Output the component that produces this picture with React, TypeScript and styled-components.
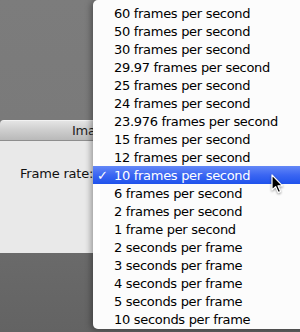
import React from 'react';
import styled, { createGlobalStyle, css } from 'styled-components';

const GlobalStyle = createGlobalStyle`
  html, body {
    margin: 0;
    padding: 0;
  }
  body {
    font-family: "DejaVu Sans", "Liberation Sans", sans-serif;
    -webkit-font-smoothing: antialiased;
  }
`;

const Screen = styled.div`
  position: relative;
  width: 300px;
  height: 332px;
  overflow: hidden;
  display: flex;
  flex-direction: column;
  background: linear-gradient(#7c7c7c 0, #7a7a7a 120px, #6a6a6a 253px, #636363 332px);
`;

const Dialog = styled.div`
  margin-top: 120px;
  width: 100px;
  display: flex;
  flex-direction: column;
  border-top-left-radius: 4px;
  overflow: hidden;
`;

const TitleBar = styled.div`
  height: 21px;
  display: flex;
  align-items: center;
  padding-left: 72px;
  overflow: hidden;
  white-space: nowrap;
  font-size: 13px;
  letter-spacing: -0.3px;
  color: #1e1e1e;
  background: linear-gradient(#e4e4e4, #cfcfcf 45%, #b9b9b9);
  border-top: 1px solid #f2f2f2;
  border-bottom: 1px solid #8e8e8e;
  box-sizing: border-box;
`;

const Title = styled.span`
  display: block;
  width: 24px;
  overflow: hidden;
`;

const Body = styled.div`
  height: 112px;
  background: #e9e9e9;
  padding: 23px 0 0 20px;
  box-sizing: border-box;
`;

const FieldRow = styled.div`
  display: flex;
  align-items: center;
  height: 18px;
`;

const Label = styled.span`
  font-size: 13px;
  letter-spacing: -0.2px;
  color: #111;
  white-space: nowrap;
`;

const Menu = styled.ul`
  position: absolute;
  left: 93px;
  top: 0;
  width: 230px;
  height: 329px;
  margin: 0;
  padding: 4px 0 0;
  box-sizing: border-box;
  list-style: none;
  background: rgba(255, 255, 255, 0.98);
  border-radius: 5px 0 0 5px;
  box-shadow: -2px 1px 6px rgba(0, 0, 0, 0.35);
`;

const Item = styled.li<{ $selected?: boolean }>`
  display: flex;
  align-items: center;
  height: 18px;
  padding-left: 4px;
  font-size: 13px;
  letter-spacing: -0.3px;
  color: #000;
  white-space: nowrap;
  ${(p) =>
    p.$selected &&
    css`
      color: #fff;
      background: linear-gradient(#6488f7, #3b66f2 50%, #1f52ec);
    `}
`;

const Check = styled.span`
  width: 17px;
  font-size: 13px;
  font-weight: bold;
`;

const Cursor = styled.svg`
  position: absolute;
  left: 271px;
  top: 174px;
  filter: drop-shadow(0 1px 1px rgba(0, 0, 0, 0.4));
`;

const rates = [
  '60 frames per second',
  '50 frames per second',
  '30 frames per second',
  '29.97 frames per second',
  '25 frames per second',
  '24 frames per second',
  '23.976 frames per second',
  '15 frames per second',
  '12 frames per second',
  '10 frames per second',
  '6 frames per second',
  '2 frames per second',
  '1 frame per second',
  '2 seconds per frame',
  '3 seconds per frame',
  '4 seconds per frame',
  '5 seconds per frame',
  '10 seconds per frame',
];

const selected = '10 frames per second';

const App: React.FC = () => {
  return (
    <>
      <GlobalStyle />
      <Screen>
        <Dialog>
          <TitleBar>
            <Title>Ima</Title>
          </TitleBar>
          <Body>
            <FieldRow>
              <Label>Frame rate:</Label>
            </FieldRow>
          </Body>
        </Dialog>
        <Menu>
          {rates.map((rate) => (
            <Item key={rate} $selected={rate === selected}>
              <Check>{rate === selected ? '✓' : ''}</Check>
              {rate}
            </Item>
          ))}
        </Menu>
        <Cursor width="13" height="21" viewBox="0 0 13 21">
          <path
            d="M1 1 L1 16 L4.6 12.6 L7.2 18.6 L9.6 17.6 L7 11.8 L11.6 11.8 Z"
            fill="#000"
            stroke="#fff"
            strokeWidth="1.2"
            strokeLinejoin="round"
          />
        </Cursor>
      </Screen>
    </>
  );
};

export default App;
